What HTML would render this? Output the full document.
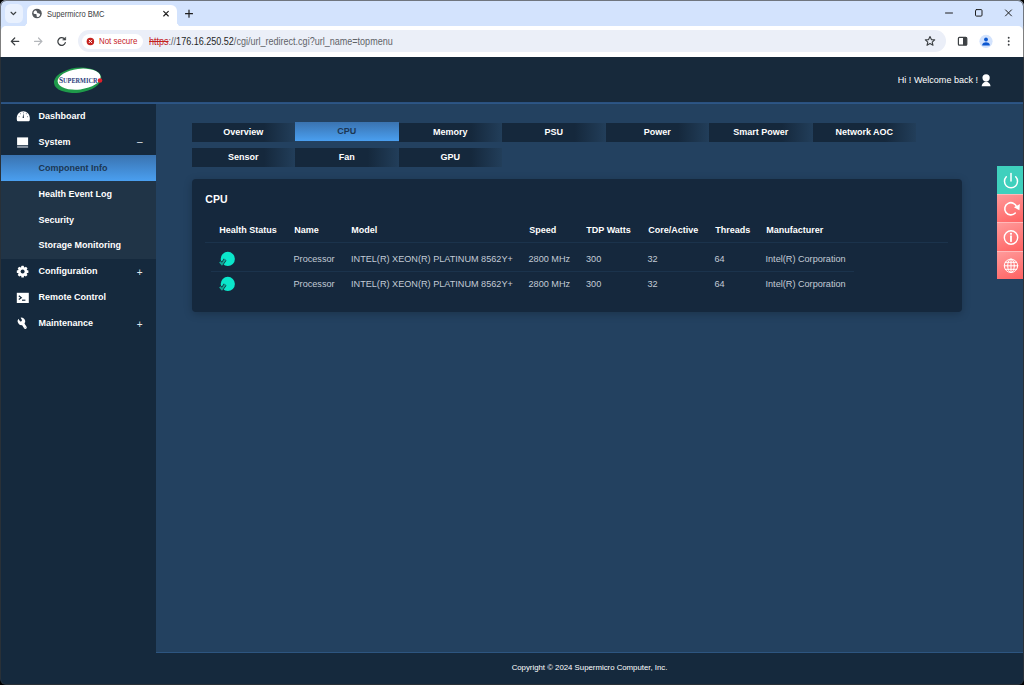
<!DOCTYPE html>
<html><head><meta charset="utf-8"><title>Supermicro BMC</title>
<style>
*{box-sizing:border-box;margin:0;padding:0}
html,body{width:1024px;height:685px;overflow:hidden;background:#000;font-family:"Liberation Sans",sans-serif}
#win{position:absolute;left:0;top:0;width:1024px;height:685px;border-radius:6px;overflow:hidden;background:linear-gradient(#d3e3fd 26px,#fff 26px,#fff 57px,#17293c 57px)}
#bord{position:absolute;left:0;top:0;width:1024px;height:685px;border-radius:6px;border:1px solid rgba(53,53,53,.63);pointer-events:none}
#inner{position:absolute;left:1px;top:1px;width:1022px;height:683px;overflow:hidden;background:#15293d;border-radius:5px}
.abs{position:absolute}
/* chrome */
#tabstrip{left:0;top:0;width:1022px;height:34px;background:#d3e3fd}
#toolbar{left:0;top:25.4px;width:1022px;height:30.6px;background:#fff;border-radius:5px 5px 0 0}
#tab{left:26px;top:4px;width:150px;height:22px;background:#fff;border-radius:6px 6px 0 0}
#tab:before,#tab:after{content:"";position:absolute;bottom:0;width:6px;height:6px}
#tab:before{left:-6px;background:radial-gradient(circle at 0 0,transparent 6px,#fff 6.5px)}
#tab:after{right:-6px;background:radial-gradient(circle at 100% 0,transparent 6px,#fff 6.5px)}
#tsearch{left:3.6px;top:3.2px;width:18.2px;height:18.8px;border-radius:5.5px;background:#e9f1fe}
.ctext{display:inline-block;transform-origin:0 50%;white-space:nowrap}
#tabtitle{left:46.4px;top:7.8px;font-size:9px;color:#3c4043;transform:scaleX(.84)}
#pill{left:77px;top:29.3px;width:868px;height:21.7px;border-radius:11px;background:#ebeff8}
#chip{left:81px;top:32.6px;width:61px;height:15.6px;border-radius:8px;background:#fff}
#nsec{left:98px;top:35px;font-size:9px;color:#c5221f;transform:scaleX(.88)}
#url{left:147.8px;top:34px;font-size:10.5px;color:#1f1f1f;transform:scaleX(.86)}
#url s{color:#c5221f}
#url i{font-style:normal;color:#5f6368}
/* page */
#page{left:0;top:56px;width:1022px;height:627px;background:#234160}
#hdr{left:0;top:0;width:1022px;height:46px;background:#17293b}
#hline{left:0;top:45px;width:1022px;height:2px;background:linear-gradient(#2a5180 50%,#2d5686 50%)}
#side{left:0;top:46px;width:155px;height:581px;background:#15293d}
#foot{left:155px;top:594.8px;width:867px;height:32.2px;background:#15293d;border-top:1px solid #2d5580;color:#fff;font-size:7.8px;text-align:center;line-height:29px}
.mi{position:absolute;left:0;width:155px;height:26px;line-height:26px;color:#fff;font-weight:bold;font-size:9px;padding-left:37.5px}
#sub{left:0;top:52.1px;width:155px;height:104px;background:#203447}
#act{left:0;top:52.1px;width:155px;height:25.7px;background:linear-gradient(#3a73b0,#4a9ff0)}
.pm{position:absolute;right:13.5px;top:2px;color:#e4e8ec;font-weight:normal;font-size:10px}
.tb{position:absolute;width:103.5px;height:18.5px;line-height:18px;color:#fff;font-weight:bold;font-size:9px;text-align:center;background:linear-gradient(90deg,#15283c 70%,#223e5a)}
.tb.r2{line-height:19px;height:19px}
.tb.on{background:linear-gradient(#3a73b0,#4a9ff0);color:#1c3653}
#card{left:190.5px;top:122.2px;width:770.5px;height:133.3px;background:#15283d;border-radius:4px;box-shadow:0 2px 8px rgba(0,0,0,.22)}
.th{position:absolute;top:0;color:#fff;font-weight:bold;font-size:9px;white-space:nowrap}
.td{position:absolute;color:#c3cbd6;font-size:9.15px;white-space:nowrap}
.sb{position:absolute;left:996.3px;width:25.7px;height:28px;overflow:hidden}
.sb.r{background:linear-gradient(160deg,#ff9a9a,#ff6262)}
.ic{position:absolute;left:0;top:0;fill:none;stroke:#fff;stroke-width:1.25;stroke-linecap:round}
</style></head><body>
<div id="win"><div id="inner">
<div id="tabstrip" class="abs"></div>
<div id="toolbar" class="abs"></div>
<div id="tsearch" class="abs"></div>
<div id="tab" class="abs"></div>
<span id="tabtitle" class="abs ctext">Supermicro BMC</span>
<div id="pill" class="abs"></div>
<div id="chip" class="abs"></div>
<span id="nsec" class="abs ctext">Not secure</span>
<span id="url" class="abs ctext"><s>https</s><i>://</i>176.16.250.52<i>/cgi/url_redirect.cgi?url_name=topmenu</i></span>

<svg class="abs" style="left:0;top:0" width="1022" height="56" viewBox="1 1 1022 56" fill="none" stroke-linecap="round" stroke-linejoin="round">
<path d="M11.100 12.300l2.300 2.300 2.300-2.300" stroke="#3c4043" stroke-width="1.250"/>
<g transform="translate(36.950 13.500)"><circle r="4.850" fill="#54585d"/><path d="M-3.300-1.300c.4-1.300 1.600-1.900 2.600-1.500.9.400.6 1.300 1 2 .5.800 1.700.5 2.400 1 .9.700.5 2-.6 2.700-.9.600-2.100.900-2.400-.100-.200-.800.300-1.500-.300-2.100-.700-.700-2.100.100-2.700-.600-.300-.400-.200-.900 0-1.400z" fill="#fff" stroke="none"/></g>
<path d="M163.700 11.400l4.600 4.600M168.300 11.400l-4.600 4.600" stroke="#1f1f1f" stroke-width="1.150"/>
<path d="M185.500 13.700h7M189 10.200v7" stroke="#1f1f1f" stroke-width="1.200"/>
<path d="M945.500 13h7" stroke="#1f1f1f" stroke-width="1"/>
<rect x="975.500" y="9.600" width="6.500" height="6.500" rx="1" stroke="#1f1f1f" stroke-width="1"/>
<path d="M1005.500 9.900l6 6M1011.500 9.900l-6 6" stroke="#1f1f1f" stroke-width="1"/>
<path d="M18.700 41.400h-7.300M14.700 38l-3.400 3.400 3.400 3.400" stroke="#3c4043" stroke-width="1.250"/>
<path d="M34.600 41.400h7.300M38.500 38l3.400 3.400-3.400 3.400" stroke="#b4b7bb" stroke-width="1.250"/>
<path d="M64.800 39.400a3.800 3.800 0 1 0 .5 3.200" stroke="#3c4043" stroke-width="1.250"/><path d="M65.700 37.300v2.800h-2.800z" fill="#3c4043" stroke="#3c4043" stroke-width=".5"/>
<circle cx="90.400" cy="41.400" r="3.750" fill="#c5221f"/><path d="M89.200 40.200l2.400 2.400M91.600 40.200l-2.400 2.400" stroke="#fff" stroke-width="1"/>
<path d="M930 36.600l1.400 3 3.300.3-2.500 2.200.8 3.200-3-1.700-3 1.700.8-3.200-2.500-2.200 3.300-.3z" stroke="#3c4043" stroke-width="1.100"/>
<rect x="958.400" y="37.400" width="8.400" height="7.800" rx="1" stroke="#3c4043" stroke-width="1.200"/><rect x="963" y="37.400" width="3.800" height="7.800" fill="#3c4043"/>
<circle cx="986" cy="41.300" r="6.600" fill="#d3e3fd"/><circle cx="986" cy="39.500" r="1.900" fill="#0b57d0"/><path d="M982.200 44.800c0-1.700 2.500-2.500 3.800-2.500s3.800.8 3.800 2.500v.6h-7.600z" fill="#0b57d0"/>
<circle cx="1008.700" cy="37.800" r=".95" fill="#3c4043"/><circle cx="1008.700" cy="41.300" r=".95" fill="#3c4043"/><circle cx="1008.700" cy="44.800" r=".95" fill="#3c4043"/>
</svg>
<div id="page" class="abs">
 <div id="hdr" class="abs"></div>
 <div class="abs" style="left:896.8px;top:17.8px;font-size:9.05px;color:#fff;white-space:nowrap">Hi ! Welcome back !</div>
<svg class="abs" style="left:50px;top:6px;overflow:visible" width="56" height="34" viewBox="0 0 56 34"><g transform="rotate(-7 27 17)"><ellipse cx="26.600" cy="17.200" rx="23.800" ry="12.500" fill="#1f9a4a"/><ellipse cx="28.200" cy="16.300" rx="21.600" ry="10.300" fill="#fff"/></g><text x="8" y="19.900" font-family="Liberation Serif,serif" font-weight="bold" font-size="7.7" text-rendering="geometricPrecision" fill="#2c3d7c" textLength="38.5" lengthAdjust="spacingAndGlyphs"><tspan font-size="9">S</tspan>UPERMICR</text><circle cx="49" cy="17.500" r="2.300" fill="#e0202a"/></svg>
 <svg class="abs" style="left:979.2px;top:15.3px" width="14" height="16" viewBox="0 0 14 16"><circle cx="6.100" cy="5.800" r="3.650" fill="#fff"/><path d="M1.600 14.200c.5-2.400 2.200-4.600 4.500-4.600s4 2.200 4.500 4.600z" fill="#fff"/></svg>
 <div id="side" class="abs">
  <div id="sub" class="abs"></div>
  <div id="act" class="abs"></div>
  <svg class="abs" style="left:14.6px;top:7.4px" width="15.2" height="12" viewBox="0 0 16 12.600"><path d="M1.1 11.2C-.3 5.5 3.3 1.2 7.7 1.2s8 4.300 6.600 10a.9.9 0 0 1-.8.500H1.900a.9.900 0 0 1-.8-.500z" fill="#fff"/><path d="M7.700 3.400l.7 5h-1.400z" fill="#15293d"/><circle cx="7.700" cy="2.800" r=".5" fill="#15293d"/><circle cx="4.600" cy="4" r=".5" fill="#15293d"/><circle cx="10.800" cy="4" r=".5" fill="#15293d"/><circle cx="3.200" cy="7" r=".5" fill="#15293d"/><circle cx="12.200" cy="7" r=".5" fill="#15293d"/></svg>
  <svg class="abs" style="left:15px;top:33px" width="14" height="13" viewBox="0 0 14 13"><rect x="1.100" y="1.400" width="11" height="7.600" fill="#fff"/><rect x="1.100" y="9.600" width="11" height="2.300" fill="#8b96a3"/></svg>
  <svg class="abs" style="left:15px;top:162px" width="14" height="14" viewBox="0 0 14 14"><g transform="translate(6.600 6.600)"><g fill="#fff"><rect x="-1.300" y="-5.800" width="2.600" height="11.600" rx=".5"/><rect x="-1.300" y="-5.800" width="2.600" height="11.600" rx=".5" transform="rotate(45)"/><rect x="-1.300" y="-5.800" width="2.600" height="11.600" rx=".5" transform="rotate(90)"/><rect x="-1.300" y="-5.800" width="2.600" height="11.600" rx=".5" transform="rotate(135)"/><circle r="4.700"/></g><circle r="2" fill="#15293d"/></g></svg>
  <svg class="abs" style="left:15px;top:189px" width="14" height="12" viewBox="0 0 14 12"><rect x=".8" y=".8" width="12" height="10.200" fill="#fff"/><path d="M2.800 3.800l2.500 1.900-2.500 1.900" fill="none" stroke="#15293d" stroke-width="1.200"/><path d="M6 8.200h3.400" stroke="#15293d" stroke-width="1.200"/></svg>
  <svg class="abs" style="left:13px;top:212px" width="16" height="18" viewBox="0 0 16 18"><g transform="translate(7.400 6.300) rotate(-32) scale(.94)"><circle r="3.900" fill="#fff"/><rect x="-1.550" y="0" width="3.100" height="9.300" rx="1.400" fill="#fff"/><path d="M-1.300 -5v3.600a1.300 1.300 0 0 0 2.600 0V-5z" fill="#15293d"/><circle cy="7.700" r=".55" fill="#b9c0c8"/></g></svg>
  <div class="mi" style="top:0.20px">Dashboard</div>
  <div class="mi" style="top:26.05px">System<span class="pm" style="top:-.4px">–</span></div>
  <div class="mi" style="top:51.90px;color:#1c3653">Component Info</div>
  <div class="mi" style="top:77.75px">Health Event Log</div>
  <div class="mi" style="top:103.60px">Security</div>
  <div class="mi" style="top:129.45px">Storage Monitoring</div>
  <div class="mi" style="top:155.30px">Configuration<span class="pm">+</span></div>
  <div class="mi" style="top:181.15px">Remote Control</div>
  <div class="mi" style="top:207.00px">Maintenance<span class="pm">+</span></div>
 </div>
 <div class="tb" style="left:190.5px;top:66px">Overview</div>
 <div class="tb on" style="left:294.0px;top:65px;height:19.3px;line-height:19.4px">CPU</div>
 <div class="tb" style="left:397.5px;top:66px">Memory</div>
 <div class="tb" style="left:501.0px;top:66px">PSU</div>
 <div class="tb" style="left:604.5px;top:66px">Power</div>
 <div class="tb" style="left:708.0px;top:66px">Smart Power</div>
 <div class="tb" style="left:811.5px;top:66px">Network AOC</div>
 <div class="tb r2" style="left:190.5px;top:90.9px">Sensor</div>
 <div class="tb r2" style="left:294.0px;top:90.9px">Fan</div>
 <div class="tb r2" style="left:397.5px;top:90.9px">GPU</div>
 <div id="card" class="abs">
  <div class="abs" style="left:13.8px;top:13.6px;font-size:10.5px;font-weight:bold;color:#fff">CPU</div>
  <div class="abs" style="left:13.8px;top:46.3px;width:742px;height:0">
   <span class="th" style="left:14px">Health Status</span>
   <span class="th" style="left:89px">Name</span>
   <span class="th" style="left:146px">Model</span>
   <span class="th" style="left:324px">Speed</span>
   <span class="th" style="left:381px">TDP Watts</span>
   <span class="th" style="left:443px">Core/Active</span>
   <span class="th" style="left:510px">Threads</span>
   <span class="th" style="left:561px">Manufacturer</span>
  </div>
  <div class="abs" style="left:13.3px;top:62.8px;width:743px;height:1px;background:#1b334c"></div>
  <div class="abs" style="left:19.6px;top:91.8px;width:643.4px;height:1px;background:#1b334c"></div>
  <div class="abs" style="left:0;top:75.1px;width:770px;height:0">
   <svg class="abs" style="left:26px;top:-3px;overflow:visible" width="18" height="16" viewBox="0 0 18 16"><circle cx="9.8" cy="7.9" r="7.1" fill="#0be6cb"/><path d="M1.800 10.900l2.100 2.300 3.300-4.700" fill="none" stroke="#16283d" stroke-width="3.200"/><path d="M1.800 10.900l2.100 2.300 3.300-4.700" fill="none" stroke="#11a896" stroke-width="1.900"/></svg>
   <span class="td" style="left:102px">Processor</span>
   <span class="td" style="left:159.5px">INTEL(R) XEON(R) PLATINUM 8562Y+</span>
   <span class="td" style="left:337px">2800 MHz</span>
   <span class="td" style="left:394.5px">300</span>
   <span class="td" style="left:456px">32</span>
   <span class="td" style="left:523px">64</span>
   <span class="td" style="left:574px">Intel(R) Corporation</span>
  </div>
  <div class="abs" style="left:0;top:99.4px;width:770px;height:0">
   <svg class="abs" style="left:26px;top:-3px;overflow:visible" width="18" height="16" viewBox="0 0 18 16"><circle cx="9.8" cy="7.9" r="7.1" fill="#0be6cb"/><path d="M1.800 10.900l2.100 2.300 3.300-4.700" fill="none" stroke="#16283d" stroke-width="3.200"/><path d="M1.800 10.900l2.100 2.300 3.300-4.700" fill="none" stroke="#11a896" stroke-width="1.900"/></svg>
   <span class="td" style="left:102px">Processor</span>
   <span class="td" style="left:159.5px">INTEL(R) XEON(R) PLATINUM 8562Y+</span>
   <span class="td" style="left:337px">2800 MHz</span>
   <span class="td" style="left:394.5px">300</span>
   <span class="td" style="left:456px">32</span>
   <span class="td" style="left:523px">64</span>
   <span class="td" style="left:574px">Intel(R) Corporation</span>
  </div>
 </div>
 <div id="hline" class="abs"></div>
 <div id="foot" class="abs">Copyright © 2024 Supermicro Computer, Inc.</div>
<div class="abs" style="left:996.3px;top:109px;width:25.7px;height:113.3px;background:#ffb9b9"></div>
 <div class="sb" style="top:109px;height:28px;background:#3fd0bd"><svg width="26" height="28" viewBox="0 0 26 28" class="ic"><g transform="translate(0 1.9)" stroke-width="1.5"><path d="M9.3 8.9a6.5 6.5 0 1 0 9.4 0" /><path d="M14 5.6v7.6"/></g></svg></div>
 <div class="sb r" style="top:138px;height:27px"><svg width="26" height="28" viewBox="0 0 26 28" class="ic"><g transform="translate(0 .1)"><path d="M18.3 17.9a6.100 6.100 0 1 1 1.400-6" stroke-width="1.600"/><path d="M22.900 9l-.5 6.200-5.500-3z" fill="#fff" stroke="none"/></g></svg></div>
 <div class="sb r" style="top:166px;height:28px"><svg width="26" height="28" viewBox="0 0 26 28" class="ic"><g transform="translate(0 .4)"><circle cx="14" cy="14.1" r="6.7" stroke-width="1.4"/><path d="M14 12.8v5" stroke-width="1.8"/><circle cx="14" cy="10.4" r="1.1" fill="#fff" stroke="none"/></g></svg></div>
 <div class="sb r" style="top:195px;height:27.3px"><svg width="26" height="28" viewBox="0 0 26 28" class="ic" style="stroke-width:1"><circle cx="14" cy="13.8" r="6.7"/><ellipse cx="14" cy="13.8" rx="3.3" ry="6.7"/><path d="M14 7.1v13.4M7.3 13.8h13.4M8.3 10.3h11.4M8.3 17.3h11.4"/></svg></div>
</div>
</div><div id="bord"></div></div>
</body></html>
